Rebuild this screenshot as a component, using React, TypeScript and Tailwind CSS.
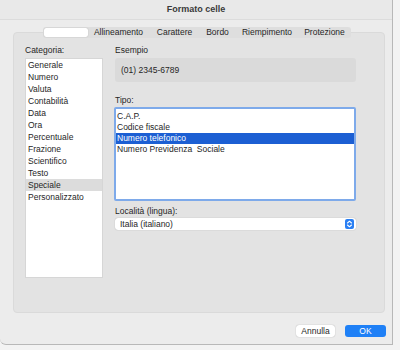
const CATEGORIE = [
  "Generale",
  "Numero",
  "Valuta",
  "Contabilità",
  "Data",
  "Ora",
  "Percentuale",
  "Frazione",
  "Scientifico",
  "Testo",
  "Speciale",
  "Personalizzato",
];

const TIPI = ["C.A.P.", "Codice fiscale", "Numero telefonico", "Numero Previdenza  Sociale"];

const TABS = [
  { label: "Allineamento", w: "w-[61px]" },
  { label: "Carattere", w: "w-[51px]" },
  { label: "Bordo", w: "w-[35px]" },
  { label: "Riempimento", w: "w-[64px]" },
  { label: "Protezione", w: "w-[51px]" },
];

function Stepper() {
  return (
    <div className="w-[9px] h-[10px] rounded-[2px] bg-[#2a7ff3] flex items-center justify-center">
      <svg width="7" height="8" viewBox="0 0 7 8" fill="none" stroke="white" strokeWidth="1.1" strokeLinecap="round" strokeLinejoin="round">
        <path d="M1.5 3 L3.5 1.2 L5.5 3" />
        <path d="M1.5 5 L3.5 6.8 L5.5 5" />
      </svg>
    </div>
  );
}

export default function App() {
  return (
    <div className="w-[400px] h-[350px] bg-[#f3f3f3] font-['Liberation_Sans',Arial,sans-serif] text-[8.5px] text-[#262626]">
      <div className="w-[393px] h-[345px] bg-[#ececec] border-r border-b border-[#b8b8b8] rounded-bl-[6px] flex flex-col">
        <div className="h-[20px] flex items-center justify-center font-bold text-[9px] text-[#3a3a3a] border-b border-[#dcdcdc] bg-[#e9e9e9]">
          Formato celle
        </div>

        <div className="relative z-10 mt-[7px] ml-[43px] w-[308px] h-[11px] flex p-px rounded-[3px] bg-[#dedede]">
          <div className="w-[44px] h-full rounded-[2px] bg-white shadow-[0_0_1px_rgba(0,0,0,0.3)]" />
          {TABS.map((t) => (
            <div key={t.label} className={`${t.w} h-full flex items-center justify-center leading-none`}>
              {t.label}
            </div>
          ))}
        </div>

        <div className="-mt-[6px] ml-[13px] w-[372px] h-[281px] rounded-[4px] bg-[#e3e3e3] border border-[#dadada] pt-[11px] px-[11px] flex gap-[12px]">
          <div className="w-[78px] flex flex-col">
            <div className="h-[12px] leading-[12px]">Categoria:</div>
            <div className="mt-[2px] h-[220px] bg-white border border-[#d6d6d6]">
              {CATEGORIE.map((c) => (
                <div
                  key={c}
                  className={`h-[12px] leading-[12px] pl-[2px] ${c === "Speciale" ? "bg-[#dcdcdc]" : ""}`}
                >
                  {c}
                </div>
              ))}
            </div>
          </div>

          <div className="w-[241px] flex flex-col">
            <div className="h-[12px] leading-[12px]">Esempio</div>
            <div className="mt-[2px] h-[24px] rounded-[3px] bg-[#dadada] flex items-center pl-[6px]">
              (01) 2345-6789
            </div>
            <div className="mt-[12px] h-[12px] leading-[12px]">Tipo:</div>
            <div className="mt-px -ml-px h-[94px] bg-white border-2 border-[#7eaaea] rounded-[2px] pt-[2px]">
              {TIPI.map((t) => (
                <div
                  key={t}
                  className={`h-[11px] leading-[11px] pl-[1px] whitespace-pre ${
                    t === "Numero telefonico" ? "bg-[#1c5fd3] text-white" : ""
                  }`}
                >
                  {t}
                </div>
              ))}
            </div>
            <div className="mt-[4px] h-[12px] leading-[12px]">Località (lingua):</div>
            <div className="mt-px h-[12px] rounded-[3px] bg-white shadow-[0_0_1px_rgba(0,0,0,0.35)] flex items-center justify-between pl-[5px] pr-[2px]">
              <span>Italia (italiano)</span>
              <Stepper />
            </div>
          </div>
        </div>

        <div className="mt-[12px] flex justify-end gap-[10px] pr-[6px]">
          <div className="w-[39px] h-[12px] rounded-[3px] bg-white shadow-[0_0_1px_rgba(0,0,0,0.4)] flex items-center justify-center">
            Annulla
          </div>
          <div className="w-[41px] h-[12px] rounded-[3px] bg-[#1f80f6] text-white flex items-center justify-center">
            OK
          </div>
        </div>
      </div>
    </div>
  );
}
